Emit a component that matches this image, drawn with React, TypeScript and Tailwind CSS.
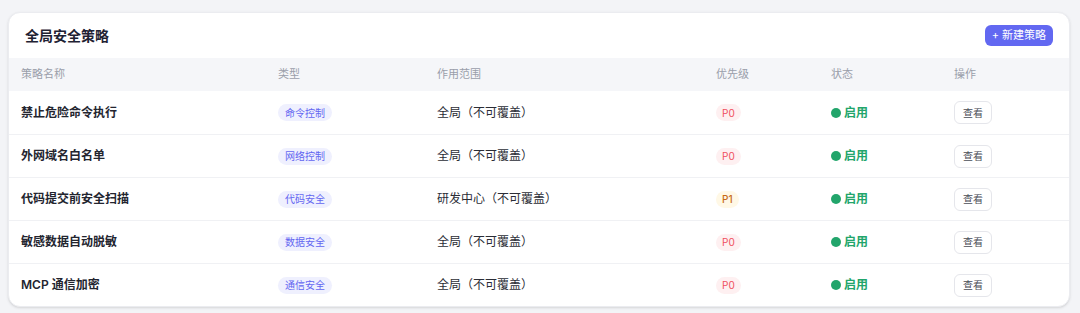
const font = { fontFamily: '"Inter", "Noto Sans CJK SC", sans-serif' };

type Policy = {
  name: string;
  type: string;
  scope: string;
  priority: "P0" | "P1";
};

const policies: Policy[] = [
  { name: "禁止危险命令执行", type: "命令控制", scope: "全局（不可覆盖）", priority: "P0" },
  { name: "外网域名白名单", type: "网络控制", scope: "全局（不可覆盖）", priority: "P0" },
  { name: "代码提交前安全扫描", type: "代码安全", scope: "研发中心（不可覆盖）", priority: "P1" },
  { name: "敏感数据自动脱敏", type: "数据安全", scope: "全局（不可覆盖）", priority: "P0" },
  { name: "MCP 通信加密", type: "通信安全", scope: "全局（不可覆盖）", priority: "P0" },
];

const cols = "grid grid-cols-[257px_159px_279px_115px_123px_1fr] items-center pl-3";

export default function App() {
  return (
    <div className="h-[313px] w-[1080px] bg-[#f3f4f7] pt-3 pl-2 pr-[10px]" style={font}>
      <div className="rounded-xl bg-white border border-[#ebecf0] shadow-sm overflow-hidden">
        {/* Header */}
        <div className="h-[45px] flex items-center justify-between px-4">
          <h2 className="text-[14px] font-bold text-[#1f2233]">全局安全策略</h2>
          <button className="h-[21px] px-[7px] rounded-md bg-[#6268f1] text-white text-[11px] leading-none">
            + 新建策略
          </button>
        </div>

        {/* Column titles */}
        <div className={`${cols} h-[33px] bg-[#f5f6f9] text-[11px] text-[#9a9eaa]`}>
          <div>策略名称</div>
          <div>类型</div>
          <div>作用范围</div>
          <div>优先级</div>
          <div>状态</div>
          <div>操作</div>
        </div>

        {policies.map((p, i) => (
          <div key={i} className={`${cols} h-[43px] ${i > 0 ? "border-t border-[#f0f1f4]" : ""}`}>
            <div className="text-[12px] font-semibold text-[#23252f]">{p.name}</div>
            <div className="flex items-center">
              <span className="flex items-center h-[17px] px-[7px] rounded-full bg-[#eff0fe] text-[10px] leading-none text-[#6366f1]">
                {p.type}
              </span>
            </div>
            <div className="text-[12px] text-[#2b2d36]">{p.scope}</div>
            <div className="flex items-center">
              {p.priority === "P0" ? (
                <span className="flex items-center h-[17px] px-[6px] rounded-full bg-[#fef0f1] text-[10px] leading-none text-[#ef4f5e]">
                  P0
                </span>
              ) : (
                <span className="flex items-center h-[17px] px-[6px] rounded-full bg-[#fff8e6] text-[10px] leading-none font-medium text-[#c76a16]">
                  P1
                </span>
              )}
            </div>
            <div className="flex items-center gap-[3px] text-[12px] font-semibold text-[#22a56b]">
              <span className="w-[10px] h-[10px] rounded-full bg-[#22a56b]" />
              启用
            </div>
            <div className="flex items-center">
              <button className="h-[23px] w-[38px] rounded-md border border-[#e5e6eb] bg-white text-[10px] leading-none text-[#4a4d57]">
                查看
              </button>
            </div>
          </div>
        ))}
      </div>
    </div>
  );
}
